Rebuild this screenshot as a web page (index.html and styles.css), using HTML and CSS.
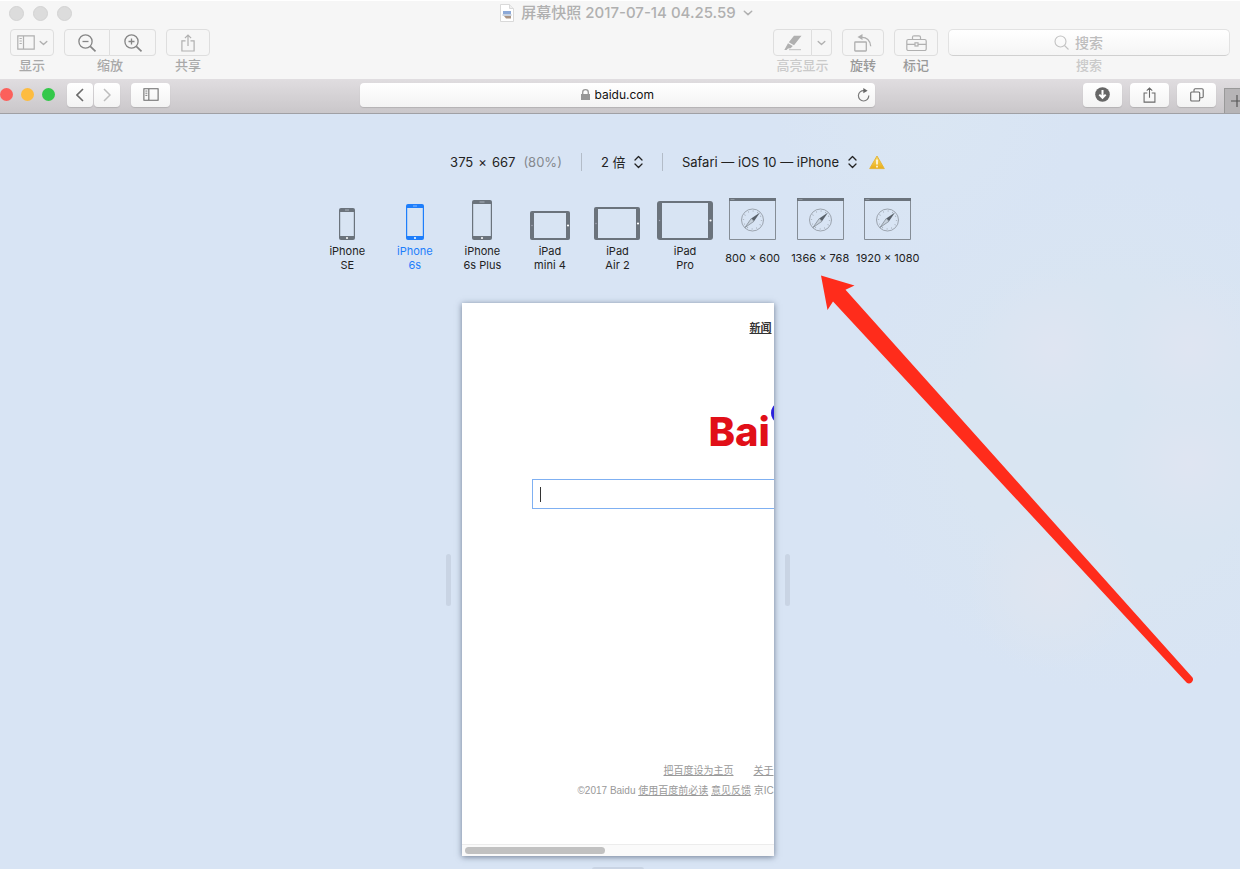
FILE: index.html
```html
<!DOCTYPE html>
<html lang="zh-CN">
<head>
<meta charset="utf-8">
<title>屏幕快照 2017-07-14 04.25.59</title>
<link rel="stylesheet" href="styles.css">
</head>
<body>
<svg class="defs" aria-hidden="true">
  <symbol id="chevron" viewBox="0 0 10 6"><path d="M1.3 1.2 5 4.6 8.7 1.2" fill="none" stroke="currentColor" stroke-width="1.5" stroke-linecap="round" stroke-linejoin="round"/></symbol>
  <symbol id="updown" viewBox="0 0 9 14"><path d="M1 5 4.500 1.500 8 5M1 9l3.500 3.500L8 9" fill="none" stroke="currentColor" stroke-width="1.300" stroke-linecap="round" stroke-linejoin="round"/></symbol>
  <symbol id="sidebar" viewBox="0 0 18 15"><g fill="none" stroke="currentColor"><path d="M.8.8h16.400v13.400H.8zM6.500 1v13" stroke-width="1.200"/><path d="M2.500 3.500h2.300M2.500 6h2.300M2.500 8.500h2.300" stroke-width="1"/></g></symbol>
  <symbol id="share" viewBox="0 0 14 18"><path d="M4.500 6.800H.9v10.200h12.200V6.800H9.500M7 12V1.200M3.900 4.200 7 1.100l3.100 3.100" fill="none" stroke="currentColor" stroke-width="1.200"/></symbol>
  <symbol id="compass" viewBox="0 0 47 42">
    <path d="M.5.5h46v41H.5z" fill="none" stroke="#858d96"/><path d="M0 0h47v3H0z" fill="#6b737c"/>
    <path d="M1.500 1.500h4" stroke="#8f979f"/>
    <circle cx="23.500" cy="22" r="11" fill="none" stroke="#949ca6" stroke-width=".9"/>
    <circle cx="23.500" cy="22" r="9" fill="none" stroke="#9aa3ad" stroke-width="1.300" stroke-dasharray=".7 4.012"/>
    <path d="M31 14.500 25 23.300 22.200 20.500z" fill="#59616a"/><path d="M16 29.500 22.200 20.500 25 23.300z" fill="#c6d0dc" stroke="#7a828b" stroke-width=".7"/>
  </symbol>
</svg>

<header class="preview-head">
  <div class="titlebar">
    <span class="dots"><i></i><i></i><i></i></span>
    <h1 class="title">
      <svg width="14" height="18" viewBox="0 0 14 18"><path d="M.5.5h9l4 4v13H.5z" fill="#fff" stroke="#d9d9d9"/><path d="M9.500.5v4h4" fill="#eee" stroke="#d9d9d9"/><path d="M3 7h8v3H3z" fill="#8ca9d8"/><path d="M2.500 10h9v2h-9z" fill="#c9d2df"/><path d="M4 12h7v2.500H6z" fill="#a99484"/></svg>
      <span>屏幕快照 2017-07-14 04.25.59</span>
      <svg width="10" height="6"><use href="#chevron"/></svg>
    </h1>
  </div>
  <div class="tools">
    <div class="tool">
      <button class="btn view" aria-labelledby="l-view"><svg width="18" height="15"><use href="#sidebar"/></svg><svg width="9" height="6"><use href="#chevron"/></svg></button>
      <span id="l-view">显示</span>
    </div>
    <div class="tool">
      <div class="pair">
        <button class="btn dark" aria-label="缩小"><svg width="20" height="20" viewBox="0 0 20 20"><g fill="none" stroke="currentColor" stroke-width="1.300"><circle cx="8.500" cy="8.500" r="6.600"/><path d="M5.500 8.500h6"/><path d="m13.300 13.300 5.200 5" stroke-width="1.700"/></g></svg></button>
        <button class="btn dark" aria-label="放大"><svg width="20" height="20" viewBox="0 0 20 20"><g fill="none" stroke="currentColor" stroke-width="1.300"><circle cx="8.500" cy="8.500" r="6.600"/><path d="M5.500 8.500h6M8.500 5.500v6"/><path d="m13.300 13.300 5.200 5" stroke-width="1.700"/></g></svg></button>
      </div>
      <span>缩放</span>
    </div>
    <div class="tool">
      <button class="btn" aria-labelledby="l-share"><svg width="14" height="18"><use href="#share"/></svg></button>
      <span id="l-share">共享</span>
    </div>
    <div class="tool faint push">
      <div class="pair">
        <button class="btn pen" aria-labelledby="l-hl"><svg width="18" height="16" viewBox="0 0 18 16"><path d="M10 .8h7.500L10 10.300 4.800 7.200zM4 8.200l4.800 2.900-2.200 2.200-2.600.3L2.500 15H.3z" fill="currentColor"/><path d="M5 14.700h12" stroke="currentColor" stroke-width=".8"/></svg></button>
        <button class="btn drop" aria-label="高亮颜色"><svg width="9" height="6"><use href="#chevron"/></svg></button>
      </div>
      <span id="l-hl">高亮显示</span>
    </div>
    <div class="tool">
      <button class="btn small" aria-labelledby="l-rot"><svg width="18" height="18" viewBox="0 0 18 18"><g fill="none" stroke="currentColor" stroke-width="1.300"><rect x=".8" y="8" width="11.500" height="9" rx=".5"/><path d="M7.500 3.300c5-.3 8.900 3.200 9.200 9"/></g><path d="M3.500 3 8.500 0v6z" fill="currentColor"/></svg></button>
      <span id="l-rot" class="strong">旋转</span>
    </div>
    <div class="tool">
      <button class="btn" aria-labelledby="l-mark"><svg width="21" height="16" viewBox="0 0 21 16"><g fill="none" stroke="currentColor" stroke-width="1.200"><rect x=".8" y="4.500" width="19.400" height="11" rx="1.500"/><path d="M6.500 4.500V2.300Q6.500.8 8 .8h5q1.500 0 1.500 1.500v2.200M1 9.300h8M12 9.300h8"/><rect x="9" y="7.800" width="3" height="3.200"/></g></svg></button>
      <span id="l-mark" class="strong">标记</span>
    </div>
    <div class="tool faint">
      <label class="search"><svg width="15" height="15" viewBox="0 0 15 15"><g fill="none" stroke="currentColor" stroke-width="1.100"><circle cx="6.500" cy="6.500" r="5.500"/><path d="m10.500 10.500 4 4"/></g></svg><input type="text" placeholder="搜索" aria-label="搜索"></label>
      <span>搜索</span>
    </div>
  </div>
</header>

<nav class="safari">
  <div class="side">
    <span class="lights"><i class="red"></i><i class="amber"></i><i class="green"></i></span>
    <div class="history">
      <button class="key narrow" aria-label="后退"><svg width="8" height="14" viewBox="0 0 8 14"><path d="M7 1 1 7l6 6" fill="none" stroke="#6a6a6a" stroke-width="1.600"/></svg></button>
      <button class="key narrow" aria-label="前进"><svg width="8" height="14" viewBox="0 0 8 14"><path d="m1 1 6 6-6 6" fill="none" stroke="#bdbdbd" stroke-width="1.500"/></svg></button>
    </div>
    <button class="key" aria-label="边栏"><svg width="16" height="13"><use href="#sidebar"/></svg></button>
  </div>
  <div class="address">
    <label class="url"><svg width="9" height="11" viewBox="0 0 9 11"><path d="M0 5h9v6H0z" fill="#969696"/><path d="M1.700 5V3.200a2.800 2.500 0 0 1 5.600 0V5" fill="none" stroke="#969696" stroke-width="1.300"/></svg><input type="text" value="baidu.com" aria-label="地址"></label>
    <button class="reload" aria-label="重新载入"><svg width="13" height="14" viewBox="0 0 13 14"><path d="M7 2.600a5.200 5.200 0 1 0 4.800 5" fill="none" stroke="#7b7b7b" stroke-width="1.200"/><path d="M6.300 0v5.200L10.600 2.800z" fill="#666"/></svg></button>
  </div>
  <div class="side end">
    <button class="key" aria-label="下载"><svg width="15" height="15" viewBox="0 0 15 15"><circle cx="7.500" cy="7.500" r="7.300" fill="#666"/><path d="M7.500 3v7M4.300 7.600l3.200 3.200 3.200-3.200" fill="none" stroke="#fff" stroke-width="2"/></svg></button>
    <button class="key" aria-label="共享"><svg width="13" height="16"><use href="#share"/></svg></button>
    <button class="key" aria-label="标签页概览"><svg width="14" height="14" viewBox="0 0 14 14"><g fill="none" stroke="currentColor" stroke-width="1.100"><rect x=".7" y="4" width="9" height="9" rx="1"/><path d="M4 3.800V2q0-1.300 1.300-1.300h6.700q1.200 0 1.200 1.200V8.600q0 1.200-1.200 1.200h-2"/></g></svg></button>
    <button class="newtab" aria-label="新标签页"><svg width="9" height="12" viewBox="0 0 9 12"><path d="M0 6h9M6 0v12" stroke="#555" stroke-width="1.200"/></svg></button>
  </div>
</nav>

<main class="stage">
  <div class="metrics">
    <p class="size"><span>375</span><span class="times">×</span><span>667</span><span class="scale">(80%)</span></p>
    <label class="pick ratio"><select aria-label="像素比"><option>2 倍</option></select><svg width="9" height="14"><use href="#updown"/></svg></label>
    <label class="pick"><select aria-label="用户代理"><option>Safari — iOS 10 — iPhone</option></select><svg width="9" height="14"><use href="#updown"/></svg></label>
    <svg class="warn" width="16" height="15" viewBox="0 0 16 15"><defs><linearGradient id="gold" x2="0" y2="1"><stop stop-color="#f9dc6b"/><stop offset="1" stop-color="#e9ad19"/></linearGradient></defs><path d="M8 1 15.300 13.600H.7z" fill="url(#gold)" stroke="#e3b53c" stroke-linejoin="round"/><path d="M8 4.500v5M8 10.800v1.600" stroke="#fff" stroke-width="1.500"/></svg>
  </div>

  <div class="devices">
    <button class="device"><span class="pic"><svg width="16" height="32" viewBox="0 0 16 32"><rect width="16" height="32" rx="2" fill="#6b737c"/><path d="M1.200 4h13.600v24H1.200z" fill="#d8e4f3"/><path d="M6 2h4" stroke="#a9b1ba"/><circle cx="8" cy="30" r="1" fill="#fff"/></svg></span><span class="name">iPhone<br>SE</span></button>
    <button class="device on"><span class="pic"><svg width="18" height="36" viewBox="0 0 18 36"><rect width="18" height="36" rx="2" fill="#1e7efb"/><path d="M1.200 4h15.600v28H1.200z" fill="#d8e4f3"/><path d="M7 2h4" stroke="#8abcff"/><circle cx="9" cy="34" r="1" fill="#fff"/></svg></span><span class="name">iPhone<br>6s</span></button>
    <button class="device"><span class="pic"><svg width="20" height="40" viewBox="0 0 20 40"><rect width="20" height="40" rx="2" fill="#6b737c"/><path d="M1.200 4h17.600v32H1.200z" fill="#d8e4f3"/><path d="M7.500 2h5" stroke="#a9b1ba"/><circle cx="10" cy="38" r="1" fill="#fff"/></svg></span><span class="name">iPhone<br>6s Plus</span></button>
    <button class="device"><span class="pic"><svg width="40" height="29" viewBox="0 0 40 29"><rect width="40" height="29" rx="2" fill="#6b737c"/><path d="M4 2h32v25H4z" fill="#d8e4f3"/><circle cx="2" cy="14.500" r=".7" fill="#aab"/><circle cx="38" cy="14.500" r="1.100" fill="#fff"/></svg></span><span class="name">iPad<br>mini 4</span></button>
    <button class="device"><span class="pic"><svg width="46" height="33" viewBox="0 0 46 33"><rect width="46" height="33" rx="2" fill="#6b737c"/><path d="M4 2h38v29H4z" fill="#d8e4f3"/><circle cx="2" cy="16.500" r=".7" fill="#aab"/><circle cx="44" cy="16.500" r="1.100" fill="#fff"/></svg></span><span class="name">iPad<br>Air 2</span></button>
    <button class="device"><span class="pic"><svg width="56" height="39" viewBox="0 0 56 39"><rect width="56" height="39" rx="3" fill="#6b737c"/><path d="M5 2h46v35H5z" fill="#d8e4f3"/><circle cx="2.500" cy="19.500" r=".7" fill="#aab"/><circle cx="53.500" cy="19.500" r="1.100" fill="#fff"/></svg></span><span class="name">iPad<br>Pro</span></button>
    <button class="device"><span class="pic"><svg width="47" height="42"><use href="#compass"/></svg></span><span class="name">800 × 600</span></button>
    <button class="device"><span class="pic"><svg width="47" height="42"><use href="#compass"/></svg></span><span class="name">1366 × 768</span></button>
    <button class="device"><span class="pic"><svg width="47" height="42"><use href="#compass"/></svg></span><span class="name">1920 × 1080</span></button>
  </div>

  <div class="resizer">
    <span class="grip"></span>
    <section class="viewport">
      <div class="site">
        <div class="site-nav"><a href="#">新闻</a></div>
        <div class="logo"><span>Bai</span><svg width="14" height="20" viewBox="0 0 14 20"><ellipse cx="7" cy="9" rx="6" ry="8.500" fill="#2b22dc"/></svg></div>
        <input class="query" type="text" aria-label="百度一下">
        <div class="site-foot">
          <p class="links"><a href="#">把百度设为主页</a><a href="#">关于</a></p>
          <p>©2017 Baidu <a href="#">使用百度前必读</a> <a href="#">意见反馈</a> 京IC</p>
        </div>
      </div>
      <div class="scroll"><span></span></div>
    </section>
    <span class="grip"></span>
  </div>
  <span class="grip flat"></span>
</main>

<svg class="arrow" width="374" height="410" viewBox="0 0 374 410" aria-hidden="true"><path d="M1 0.500 34.500 10.500 25.500 14.800 372.500 402.500A4 4 0 0 1 366.500 407.500L13 26.500 7.500 35z" fill="#ff2c1b"/></svg>
</body>
</html>
```

FILE: styles.css
```css
* { box-sizing: border-box; }

body {
  margin: 0;
  min-height: 100vh;
  display: flex;
  flex-direction: column;
  position: relative;
  overflow: hidden;
  background: #f6f6f6;
  font: 13px/16px Inter, "Noto Sans CJK SC", sans-serif;
  color: #222;
}

h1, p { margin: 0; font-weight: 400; }
button, input, select { font: inherit; color: inherit; border: 0; padding: 0; margin: 0; background: none; outline: 0; }
button { display: flex; align-items: center; justify-content: center; }
svg { display: block; flex: none; }
.defs { position: absolute; width: 0; height: 0; }

/* Preview window */
.preview-head { height: 79px; border-top: 1px solid #fff; }
.titlebar { height: 28px; padding: 0 9px 4px; display: grid; grid-template-columns: 1fr auto 1fr; align-items: center; }
.dots { display: flex; gap: 9px; }
.dots i { width: 15px; height: 15px; border-radius: 50%; background: #dcdcdc; border: 1px solid #d3d3d3; }
.title { display: flex; align-items: center; gap: 7px; padding-left: 13px; font-size: 15px; line-height: 20px; font-weight: 500; color: #b0b0b0; }

.tools { display: flex; padding: 0 10px; gap: 10px; color: #a6a6a6; }
.tool { display: flex; flex-direction: column; align-items: center; font-size: 13px; line-height: 18px; font-weight: 500; color: #a9a9a9; }
.tool.faint { color: #cacaca; }
.tool .strong { color: #999; }
.tool.push { margin-left: auto; }
.btn { width: 44px; height: 27px; border: 1px solid #dedede; border-radius: 4px; gap: 4px; color: #b0b0b0; }
.btn.small { width: 42px; }
.pair { display: flex; }
.pair .btn:first-child { border-radius: 4px 0 0 4px; }
.pair .btn:last-child { border-radius: 0 4px 4px 0; border-left: 0; }
.pair .btn.dark { width: 46px; color: #868686; }
.pair .btn.pen { width: 39px; }
.pair .btn.drop { width: 20px; }
.search { width: 282px; height: 27px; padding-right: 20px; border: 1px solid #e2e2e2; border-bottom-color: #d0d0d0; border-radius: 5px; background: linear-gradient(#fff, #f5f5f5); display: flex; align-items: center; justify-content: center; gap: 6px; color: #c2c2c2; font-size: 14px; }
.search input { width: 29px; }
.search input::placeholder { color: #bdbdbd; }

/* Safari window */
.safari { height: 35px; display: grid; grid-template-columns: 360px 1fr 365px; background: linear-gradient(#e0dde0, #cac7ca); border-bottom: 1px solid #a0a0a4; }
.side { display: flex; align-items: center; padding-bottom: 3px; color: #686868; }
.lights { display: flex; gap: 8px; margin-right: 12px; }
.lights i { width: 13px; height: 13px; border-radius: 50%; }
.red { background: #fc605b; }
.amber { background: #fdbc40; }
.green { background: #34c84a; }
.history { display: flex; gap: 1px; margin-right: 11px; }
.key { width: 39px; height: 24px; border-radius: 4px; background: linear-gradient(#fff, #f3f3f3); box-shadow: 0 1px 1px #b4b2b4; }
.narrow { width: 26px; }
.end { justify-content: flex-end; gap: 8px; }
.newtab { width: 16px; height: 25px; align-self: flex-end; background: #b6b4b6; border: 1px solid #999; border-width: 1px 0 0 1px; justify-content: flex-end; margin-bottom: -3px; }
.address { align-self: center; margin-bottom: 3px; height: 24px; border-radius: 4px; background: linear-gradient(#fff, #f3f3f3); box-shadow: 0 1px 1px #b4b2b4; display: grid; grid-template-columns: 24px 1fr 24px; align-items: center; justify-items: center; }
.url { grid-column: 2; display: flex; align-items: center; justify-content: center; gap: 5px; color: #111; font-size: 12px; }
.url input { width: 60px; }

/* Responsive design mode */
.stage {
  flex: 1;
  display: flex;
  flex-direction: column;
  align-items: center;
  padding: 38px 5px 0 0;
  background:
    radial-gradient(circle at 1053px 235px, #dfe5f2 0, #dce5f2 35px, transparent 80px),
    radial-gradient(circle at 1190px 235px, #dfe5f2 0, #dce5f2 35px, transparent 80px),
    radial-gradient(circle at 1190px 350px, #dfe5f2 0, #dce5f2 35px, transparent 80px),
    radial-gradient(circle at 1052px 470px, #dfe5f0 0, #dce5f1 40px, transparent 85px),
    radial-gradient(circle at 1110px 320px, #d9e5f2 0, #d9e5f2 150px, transparent 260px),
    radial-gradient(circle at 925px 0, #dae6f3 0, transparent 150px),
    #d8e4f4;
}
.metrics { display: flex; align-items: center; height: 20px; padding-left: 100px; }
.size { display: flex; }
.times { margin: 0 5px; }
.scale { margin-left: 8px; color: #85898e; }
.pick { display: flex; align-items: center; gap: 8px; margin-left: 19px; padding-left: 19px; height: 18px; border-left: 1px solid #b3bcc8; }
.pick select { appearance: none; }
.warn { margin-left: 12px; }

.devices { display: grid; grid-template-columns: repeat(9, 1fr); width: 608px; margin-top: 26px; }
.device { flex-direction: column; gap: 4px; font-size: 11px; line-height: 14px; white-space: nowrap; }
.device.on { color: #1e7efb; }
.pic { height: 42px; display: flex; align-items: flex-end; }
.name { height: 28px; display: flex; align-items: center; text-align: center; }

.resizer { display: flex; align-items: center; gap: 11px; margin-top: 31px; }
.grip { width: 5px; height: 52px; border-radius: 3px; background: #c9d4e4; }
.flat { width: 52px; height: 5px; margin: 11px 0 -3px; }
.viewport { width: 312px; background: #fff; box-shadow: 0 1px 6px rgba(40, 55, 80, .6); overflow: hidden; }
.site { height: 541px; display: flex; flex-direction: column; overflow: hidden; font-size: 10px; line-height: 20px; color: #999; }
.site a { color: inherit; }
.site-nav { padding: 15px 2px 0 0; text-align: right; font-size: 11px; font-weight: 700; color: #333; }
.logo { display: flex; padding-left: 247px; margin-top: 66px; }
.logo span { font-size: 40px; line-height: 56px; font-weight: 800; color: #e10f18; }
.query { width: 320px; height: 30px; flex: none; margin: 19px 0 0 70px; border: 1px solid #7fb0f2; background: linear-gradient(#333, #333) 7px center / 1px 15px no-repeat; }
.site-foot { margin-top: auto; margin-bottom: 43px; padding-left: 116px; white-space: nowrap; font-family: "Liberation Sans", "Noto Sans CJK SC", sans-serif; }
.links { display: flex; gap: 20px; padding-left: 86px; }
.scroll { height: 12px; padding: 2px 3px; background: #fafafa; border-top: 1px solid #ececec; }
.scroll span { display: block; width: 140px; height: 7px; border-radius: 4px; background: #c1c1c1; }

.arrow { position: absolute; top: 275px; left: calc(50% + 200px); pointer-events: none; }
```
